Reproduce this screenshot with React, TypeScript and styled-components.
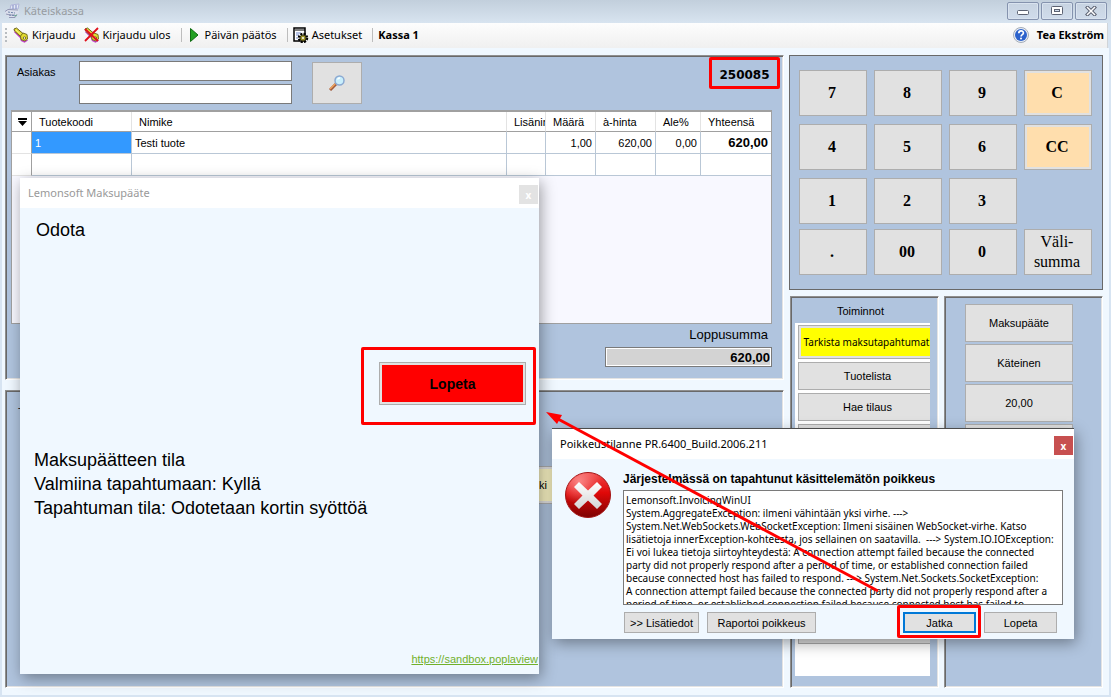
import React from 'react';
import styled, { createGlobalStyle, css } from 'styled-components';

const ui = '"Noto Sans", "Open Sans", sans-serif';
const sans = '"Liberation Sans", Arial, sans-serif';
const serif = '"Liberation Serif", "Times New Roman", serif';

const Global = createGlobalStyle`
  * { box-sizing: border-box; }
  body { margin: 0; background: #d7e4f2; color: #000; font: 11px/14px ${sans}; }
  button, input, textarea { font: inherit; color: inherit; margin: 0; padding: 0; border-radius: 0; }
  svg { display: block; flex: none; }
`;

const Window = styled.div`
  position: relative;
  min-height: 100vh;
  padding: 0 2px 2px;
  display: flex;
  flex-direction: column;
  overflow: hidden;
  background: #d7e4f2;
`;

const TitleBar = styled.header`
  height: 23px;
  padding: 2px 2px 3px 4px;
  margin: 0 -2px;
  display: flex;
  align-items: center;
  gap: 4px;
  background: linear-gradient(#c2cfdc, #d8e4f0);
  color: #979ca1;
  font: 11px/16px ${ui};
`;

const TitleText = styled.span`
  flex: 1;
`;

const WindowControls = styled.div`
  display: flex;
  gap: 2px;
  padding-right: 2px;
`;

const ControlButton = styled.button`
  width: 32px;
  height: 18px;
  display: grid;
  place-items: center;
  border: 1px solid #8593ae;
  border-radius: 2px;
  background: linear-gradient(#c7d3e1, #d0dceb);
  box-shadow: inset 0 0 0 1px #d9e3ef;
`;

const Toolbar = styled.nav`
  height: 25px;
  display: flex;
  align-items: center;
  margin-right: 1px;
  padding: 0 3px 2px 3px;
  background: linear-gradient(#fdfdfd, #f0f0f0);
  border-right: 1px solid #d0d4d8;
  font: 11px/16px ${ui};
`;

const Grip = styled.span`
  width: 2px;
  height: 14px;
  margin-right: 6px;
  background: repeating-linear-gradient(#b8bcc0 0 2px, transparent 2px 4px);
`;

const ToolButton = styled.button`
  display: flex;
  align-items: center;
  gap: 3px;
  margin-right: 8px;
  border: 0;
  background: none;
  white-space: nowrap;
`;

const Separator = styled.span`
  width: 1px;
  height: 14px;
  margin: 0 5px 0 2px;
  background: #bdbdbd;
`;

const ToolLabel = styled.strong`
  white-space: nowrap;
`;

const User = styled.div`
  margin-left: auto;
  display: flex;
  align-items: center;
  gap: 8px;
  font-weight: bold;
`;

const Workspace = styled.main`
  flex: 1;
  display: flex;
  gap: 5px;
  padding: 7px 6px 7px 3px;
  background: #f0f8ff;
`;

const SaleColumn = styled.div`
  flex: 1;
  min-width: 0;
  display: flex;
  flex-direction: column;
  gap: 10px;
`;

const SideColumn = styled.div`
  width: 314px;
  flex: none;
  display: flex;
  flex-direction: column;
  gap: 6px;
`;

const sunken = css`
  border: 1px solid;
  border-color: #8f8f8f #fff #fff #8f8f8f;
  box-shadow: inset 1px 1px 0 #696969, inset -1px -1px 0 #e3e3e3;
  background: #b0c4de;
`;

const SalePanel = styled.section`
  ${sunken}
  height: 325px;
  padding: 5px 11px 12px 5px;
  display: flex;
  flex-direction: column;
`;

const SaleHead = styled.div`
  display: flex;
  align-items: flex-start;
  height: 49px;
  padding-left: 6px;
`;

const CustomerLabel = styled.label`
  width: 62px;
  padding-top: 4px;
`;

const CustomerFields = styled.div`
  width: 213px;
  display: grid;
  gap: 3px;
  margin-right: 20px;
`;

const TextBox = styled.input`
  width: 100%;
  height: 20px;
  padding: 0 3px;
  border: 1px solid #7a7a7a;
  background: #fff;
`;

const Button = styled.button<{ $w?: number; $h?: number }>`
  width: ${(p) => (p.$w ? `${p.$w}px` : '100%')};
  height: ${(p) => p.$h ?? 28}px;
  flex: none;
  display: grid;
  place-items: center;
  border: 1px solid #adadad;
  background: #e1e1e1;
  white-space: nowrap;
`;

const SearchButton = styled(Button)`
  margin-top: 1px;
`;

const Highlight = styled.div`
  border: 3px solid #f00;
  border-radius: 2px;
  pointer-events: none;
`;

const ReceiptHighlight = styled(Highlight)`
  margin: -4px -8px 0 auto;
  width: 71px;
  height: 32px;
  padding-top: 4px;
  display: grid;
  place-items: center;
  font: bold 12px/14px "DejaVu Sans", sans-serif;
`;

const GridFrame = styled.div`
  flex: 1;
  border: 1px solid #a0a0a0;
  border-top-width: 2px;
  background: #f8f8ff;
`;

const Grid = styled.table`
  width: 100%;
  table-layout: fixed;
  border-collapse: separate;
  border-spacing: 0;
  background: #fff;
  th, td {
    height: 22px;
    padding: 0 3px;
    border-right: 1px solid #b9c7d6;
    border-bottom: 1px solid #b9c7d6;
    overflow: hidden;
    white-space: nowrap;
    text-align: left;
    font-weight: normal;
  }
  th {
    height: 20px;
    padding: 0 0 0 7px;
    border-right-color: #e3e3e3;
    border-bottom-color: #a0a0a0;
  }
  th:first-child {
    padding-left: 6px;
  }
  tr > :first-child {
    border-right-color: #a0a0a0;
  }
  td:first-child {
    border-bottom-color: #e3e3e3;
  }
  tr > :last-child {
    border-right: 0;
  }
`;

const Col = styled.col<{ $w?: number }>`
  width: ${(p) => (p.$w ? `${p.$w}px` : 'auto')};
`;

const SelectedCell = styled.td`
  background: #3399ff;
  color: #fff;
`;

const NumberCell = styled.td<{ $strong?: boolean }>`
  && {
    text-align: right;
    ${(p) => p.$strong && `font: bold 13px/14px ${sans};`}
  }
`;

const Total = styled.div`
  display: flex;
  flex-direction: column;
  align-items: flex-end;
  gap: 4px;
  padding-top: 3px;
`;

const TotalLabel = styled.label`
  padding-right: 4px;
  font: 13px/16px ${sans};
`;

const TotalBox = styled.input`
  width: 167px;
  height: 20px;
  padding: 0 1px;
  border: 1px solid #7a7a7a;
  box-shadow: inset 0 0 0 1px #fff;
  background: #d3d3d3;
  text-align: right;
  font: bold 13px/16px ${sans};
`;

const LowerPanel = styled.section`
  ${sunken}
  flex: 1;
  display: flex;
  align-items: flex-start;
  padding: 14px 200px 0 12px;
`;

const KhakiButton = styled(Button)`
  margin: 61px 0 0 auto;
  box-shadow: inset 0 0 0 2px #e1e1e1;
  background: #fbf5c4;
`;

const KeypadPanel = styled.section`
  height: 235px;
  padding: 14px 10px 14px 9px;
  border: 1px solid #696969;
  background: #b0c4de;
  display: flex;
  justify-content: space-between;
`;

const KeyColumn = styled.div`
  display: grid;
  width: 68px;
  grid-template-rows: 46px 46px 46px 46px;
  row-gap: 8px;
  align-content: start;
`;

const Key = styled.button<{ $accent?: boolean; $plain?: boolean }>`
  border: 1px solid #adadad;
  background: ${(p) => (p.$accent ? '#ffdead' : '#e1e1e1')};
  box-shadow: inset 0 0 0 2px #e1e1e1;
  font: ${(p) => (p.$plain ? 'normal' : 'bold')} 16px/20px ${serif};
  white-space: pre-line;
  padding-right: 2px;
  &:nth-child(4) {
    margin-top: -3px;
    margin-bottom: 3px;
  }
`;

const KeyGap = styled.span``;

const SidePanels = styled.div`
  flex: 1;
  display: flex;
  gap: 5px;
  padding-left: 1px;
`;

const ActionsPanel = styled.section`
  ${sunken}
  width: 149px;
  padding: 6px 8px 11px 4px;
  display: flex;
  flex-direction: column;
`;

const ActionsTitle = styled.h2`
  margin: 0;
  height: 20px;
  padding-right: 4px;
  font: 11px/16px ${sans};
  text-align: center;
`;

const ActionsList = styled.div`
  flex: 1;
  padding: 2px 0 0 3px;
  display: flex;
  flex-direction: column;
  gap: 3px;
  overflow: hidden;
  background: #fff;
`;

const WarnButton = styled(Button)`
  background: #ff0;
  box-shadow: inset 0 0 0 2px #e1e1e1;
  font: 10px/14px ${ui};
`;

const PaymentPanel = styled.section`
  ${sunken}
  flex: 1;
  padding: 7px 20px;
  display: flex;
  flex-direction: column;
  gap: 2px;
`;

const Dialog = styled.section`
  position: absolute;
  display: flex;
  flex-direction: column;
  background: #f0f8ff;
  box-shadow: 2px 4px 14px rgba(0, 0, 0, 0.38);
`;

const DialogTitle = styled.header<{ $muted?: boolean }>`
  height: 30px;
  display: flex;
  align-items: center;
  justify-content: space-between;
  padding: 0 1px 0 8px;
  background: #fff;
  color: ${(p) => (p.$muted ? '#999' : '#000')};
  font: 11px/16px ${ui};
`;

const CloseButton = styled.button<{ $muted?: boolean }>`
  width: 19px;
  height: 19px;
  margin-top: 3px;
  border: 0;
  background: ${(p) => (p.$muted ? '#e3e3e3' : '#c75050')};
  color: #fff;
  font: bold 10px/16px ${ui};
`;

const TerminalDialog = styled(Dialog)`
  left: 20px;
  top: 178px;
  width: 519px;
  height: 496px;
`;

const TerminalBody = styled.div`
  flex: 1;
  padding: 10px 0 7px 14px;
  display: flex;
  flex-direction: column;
  font: 18px/24px ${sans};
`;

const StatusText = styled.p`
  margin: 0 2px;
`;

const StopHighlight = styled(Highlight)`
  align-self: flex-end;
  width: 175px;
  height: 78px;
  margin: 105px 3px 23px 0;
  padding: 12px 7px 17px 15px;
  display: flex;
  pointer-events: auto;
`;

const StopButton = styled.button`
  flex: 1;
  border: 1px solid #adadad;
  background: #f00;
  box-shadow: inset 0 0 0 2px #e1e1e1;
  font: bold 14px/16px ${sans};
`;

const TerminalState = styled.p`
  margin: 0;
  white-space: pre-line;
`;

const TerminalLink = styled.a`
  margin: auto 1px 0 auto;
  color: #71b02b;
  font: 11px/16px ${sans};
`;

const ErrorDialog = styled(Dialog)`
  left: 552px;
  top: 429px;
  width: 522px;
  height: 210px;
  box-shadow: 2px 4px 14px rgba(0, 0, 0, 0.38), 0 -1px 0 #555;
`;

const ErrorBody = styled.div`
  flex: 1;
  display: flex;
  gap: 12px;
  padding: 13px 11px 6px 13px;
`;

const ErrorContent = styled.div`
  flex: 1;
  display: flex;
  flex-direction: column;
`;

const ErrorHeading = styled.h2`
  margin: 0 0 4px;
  font: bold 12px/14px ${sans};
  white-space: nowrap;
`;

const ErrorText = styled.textarea`
  display: block;
  width: 100%;
  height: 115px;
  padding: 3px 2px;
  border: 1px solid #7a7a7a;
  background: #fff;
  resize: none;
  outline: none;
  overflow: hidden;
  white-space: pre;
  font: 10px/13px ${ui};
`;

const ErrorActions = styled.div`
  display: flex;
  gap: 8px;
  padding: 7px 6px 0 1px;
`;

const FocusSlot = styled.div`
  position: relative;
  margin-left: auto;
`;

const ContinueButton = styled(Button)`
  border: 2px solid #0078d7;
`;

const ContinueHighlight = styled(Highlight)`
  position: absolute;
  inset: -7px -5px -5px -6px;
`;

const Arrow = styled.svg`
  position: absolute;
  left: 546px;
  top: 411px;
  pointer-events: none;
`;

const AppIcon = () => (
  <svg width="16" height="16" viewBox="0 0 16 16" fill="none" opacity="0.75">
    <path d="M6 6l1-4 8-1-1 5z" fill="#eef0fb" stroke="#a9aad8" />
    <path d="M1 8l3-2 10 0 1 3-2 4-6 2-5-3z" fill="#e0e1ee" />
    <path d="M1 8.500l3-2 10 .5M2 11l4 1 5 0M5 14.500l6 0 2-3" stroke="#7e80a4" />
    <path d="M4 9l7 1M5 12l5 .5" stroke="#4f6796" strokeDasharray="2 1" />
    <path d="M8 3h2M11 3h2M8 5h2M11 5h2" stroke="#6670b8" />
    <path d="M10 13l3-1" stroke="#4e9b78" />
  </svg>
);

const KeyIcon = ({ crossed = false }: { crossed?: boolean }) => (
  <svg width="16" height="16" viewBox="0 0 16 16" fill="none">
    <path d="M1.500 4.500l6 6 1 3 3 1.500 3-2" stroke="#c23cc8" strokeWidth="1.500" />
    <path d="M1 2l2.500-1L10 6.500 7.500 9.500 1.500 4z" fill="#e2da30" stroke="#6d6420" />
    <path d="M7.500 9l2.500-3 4 1.500.5 4.500-2.500 2-4-1.500z" fill="#e2da30" stroke="#77701c" />
    <path d="M3 3l4.500 4" stroke="#f8f490" />
    <circle cx="11.500" cy="11" r="1.200" fill="#fff" stroke="#77701c" />
    {crossed && <path d="M1 14L14 1M1 2l13 12" stroke="#e0101c" strokeWidth="1.800" />}
  </svg>
);

const PlayIcon = () => (
  <svg width="15" height="16" viewBox="-3 0 15 16">
    <path d="M.5 1.500L8 8 .5 14.500z" fill="#22a022" stroke="#0f6d12" />
  </svg>
);

const SettingsIcon = () => (
  <svg width="16" height="16" viewBox="0 0 16 16" fill="none">
    <path d="M1 1h11v13H1z" fill="#fff" stroke="#000" strokeWidth="1.500" />
    <path d="M2 3h10" stroke="#000" />
    <path d="M3 6h5M3 8h3M3 11h2" stroke="#7187c9" />
    <circle cx="10" cy="11" r="4" stroke="#000" strokeWidth="2.500" strokeDasharray="2 1.140" />
    <circle cx="10" cy="11" r="3" fill="#9a9228" stroke="#3c3810" />
    <circle cx="10" cy="11" r="1" fill="#fff" />
  </svg>
);

const HelpIcon = () => (
  <svg width="16" height="16" viewBox="0 0 16 16" fill="none">
    <circle cx="8" cy="8" r="7.500" fill="#e9eef6" stroke="#a5adb8" />
    <circle cx="8" cy="8" r="6" fill="#2c62cc" />
    <path d="M5.800 6.200c0-3 4.600-3 4.600-.3 0 1.800-2.300 1.700-2.300 3.600" stroke="#fff" strokeWidth="1.700" />
    <circle cx="8" cy="11.600" r="1" fill="#fff" />
  </svg>
);

const SearchIcon = () => (
  <svg width="16" height="16" viewBox="0 0 16 16" fill="none">
    <path d="M1 15l6-6" stroke="#a05a3c" strokeWidth="3" />
    <path d="M1 14l5.500-5.500" stroke="#f0a45c" strokeWidth="1.500" />
    <circle cx="10.500" cy="5.500" r="4.500" fill="#c9effc" stroke="#8aa9d2" strokeWidth="1.500" />
    <path d="M8.500 4.500c.5-1 1.500-1.500 2.500-1.500" stroke="#fff" strokeWidth="1.500" />
  </svg>
);

const FilterIcon = () => (
  <svg width="9" height="8" viewBox="0 0 9 8">
    <path d="M0 0h9v2H0zM0 3h9L4.500 8z" fill="#000" />
  </svg>
);

const ErrorIcon = () => (
  <svg width="46" height="46" viewBox="0 0 46 46" fill="none">
    <defs>
      <linearGradient id="ball" x1="0" y1="0" x2="0" y2="1">
        <stop offset="0" stopColor="#f04848" />
        <stop offset="0.450" stopColor="#e00808" />
        <stop offset="1" stopColor="#7c0202" />
      </linearGradient>
      <radialGradient id="shine" cx="0.300" cy="0.200" r="0.500">
        <stop offset="0" stopColor="#ff9c9c" stopOpacity="0.800" />
        <stop offset="1" stopColor="#ff9c9c" stopOpacity="0" />
      </radialGradient>
      <linearGradient id="cross" x1="0" y1="0" x2="0" y2="1">
        <stop offset="0" stopColor="#fff" />
        <stop offset="1" stopColor="#d4d4d4" />
      </linearGradient>
    </defs>
    <circle cx="23" cy="23" r="22.500" fill="url(#ball)" stroke="#a31414" />
    <circle cx="23" cy="23" r="22" fill="url(#shine)" />
    <path
      d="M14 10L23 18.500 32 10l5 5-8.500 8.500L37 32l-5 5-9-8.500L14 37l-5-5 8.500-8.500L9 15z"
      fill="url(#cross)"
    />
  </svg>
);

const keyColumns = [
  ['7', '4', '1', '.'],
  ['8', '5', '2', '00'],
  ['9', '6', '3', '0'],
];

const headers = ['Tuotekoodi', 'Nimike', 'Lisänim', 'Määrä', 'à-hinta', 'Ale%', 'Yhteensä'];
const widths = [20, 100, undefined, 39, 50, 60, 45, 70];
const spareActions = [28, 28, 28, 28, 28, 28, 34];

const errorMessage = [
  'Lemonsoft.InvoicingWinUI',
  'System.AggregateException: ilmeni vähintään yksi virhe. --->',
  'System.Net.WebSockets.WebSocketException: Ilmeni sisäinen WebSocket-virhe. Katso',
  'lisätietoja innerException-kohteesta, jos sellainen on saatavilla.  ---> System.IO.IOException:',
  'Ei voi lukea tietoja siirtoyhteydestä: A connection attempt failed because the connected',
  'party did not properly respond after a period of time, or established connection failed',
  'because connected host has failed to respond. ---> System.Net.Sockets.SocketException:',
  'A connection attempt failed because the connected party did not properly respond after a',
  'period of time, or established connection failed because connected host has failed to',
].join('\n');

export default function App() {
  return (
    <>
      <Global />
      <Window>
        <TitleBar>
          <AppIcon />
          <TitleText>Käteiskassa</TitleText>
          <WindowControls>
            <ControlButton aria-label="Pienennä">
              <svg width="12" height="10" viewBox="0 0 12 10">
                <rect x="0.500" y="4.500" width="11" height="4" rx="1" fill="#fff" stroke="#5c6272" />
              </svg>
            </ControlButton>
            <ControlButton aria-label="Suurenna">
              <svg width="12" height="10" viewBox="0 0 12 10">
                <rect x="0.500" y="0.500" width="11" height="8" rx="1" fill="#fff" stroke="#5c6272" />
                <rect x="3.500" y="3.500" width="5" height="2" fill="#d0dceb" stroke="#5c6272" />
              </svg>
            </ControlButton>
            <ControlButton aria-label="Sulje">
              <svg width="12" height="10" viewBox="0 0 12 10" fill="none">
                <path d="M2.500 1.500l7 7M9.500 1.500l-7 7" stroke="#5c6272" strokeWidth="3.500" strokeLinecap="square" />
                <path d="M2.500 1.500l7 7M9.500 1.500l-7 7" stroke="#fff" strokeWidth="1.500" strokeLinecap="square" />
              </svg>
            </ControlButton>
          </WindowControls>
        </TitleBar>

        <Toolbar>
          <Grip />
          <ToolButton><KeyIcon />Kirjaudu</ToolButton>
          <ToolButton><KeyIcon crossed />Kirjaudu ulos</ToolButton>
          <Separator />
          <ToolButton><PlayIcon />Päivän päätös</ToolButton>
          <Separator />
          <ToolButton><SettingsIcon />Asetukset</ToolButton>
          <Separator />
          <ToolLabel>Kassa 1</ToolLabel>
          <User><HelpIcon />Tea Ekström</User>
        </Toolbar>

        <Workspace>
          <SaleColumn>
            <SalePanel>
              <SaleHead>
                <CustomerLabel htmlFor="customer">Asiakas</CustomerLabel>
                <CustomerFields>
                  <TextBox id="customer" />
                  <TextBox aria-label="Asiakkaan nimi" />
                </CustomerFields>
                <SearchButton $w={50} $h={42} aria-label="Hae asiakas"><SearchIcon /></SearchButton>
                <ReceiptHighlight>250085</ReceiptHighlight>
              </SaleHead>
              <GridFrame>
                <Grid>
                  <colgroup>
                    {widths.map((w, i) => <Col key={i} $w={w} />)}
                  </colgroup>
                  <thead>
                    <tr>
                      <th><FilterIcon /></th>
                      {headers.map((h) => <th key={h}>{h}</th>)}
                    </tr>
                  </thead>
                  <tbody>
                    <tr>
                      <td />
                      <SelectedCell>1</SelectedCell>
                      <td>Testi tuote</td>
                      <td />
                      <NumberCell>1,00</NumberCell>
                      <NumberCell>620,00</NumberCell>
                      <NumberCell>0,00</NumberCell>
                      <NumberCell $strong>620,00</NumberCell>
                    </tr>
                    <tr>
                      <td /><td /><td /><td /><td /><td /><td /><td />
                    </tr>
                  </tbody>
                </Grid>
              </GridFrame>
              <Total>
                <TotalLabel htmlFor="total">Loppusumma</TotalLabel>
                <TotalBox id="total" readOnly value="620,00" />
              </Total>
            </SalePanel>
            <LowerPanel>
              <span>T</span>
              <KhakiButton $w={80} $h={38}>ki</KhakiButton>
            </LowerPanel>
          </SaleColumn>

          <SideColumn>
            <KeypadPanel>
              {keyColumns.map((keys) => (
                <KeyColumn key={keys[0]}>
                  {keys.map((k) => <Key key={k}>{k}</Key>)}
                </KeyColumn>
              ))}
              <KeyColumn>
                <Key $accent>C</Key>
                <Key $accent>CC</Key>
                <KeyGap />
                <Key $plain>{'Väli-\nsumma'}</Key>
              </KeyColumn>
            </KeypadPanel>
            <SidePanels>
              <ActionsPanel>
                <ActionsTitle>Toiminnot</ActionsTitle>
                <ActionsList>
                  <WarnButton $w={137} $h={34}>Tarkista maksutapahtumat</WarnButton>
                  <Button $w={139}>Tuotelista</Button>
                  <Button $w={139}>Hae tilaus</Button>
                  {spareActions.map((h, i) => (
                    <Button key={i} $w={139} $h={h} aria-label={`Toiminto ${i + 4}`} />
                  ))}
                </ActionsList>
              </ActionsPanel>
              <PaymentPanel>
                <Button $w={108} $h={38}>Maksupääte</Button>
                <Button $w={108} $h={38}>Käteinen</Button>
                <Button $w={108} $h={38}>20,00</Button>
                <Button $w={108} $h={38} aria-label="Maksutapa 4" />
              </PaymentPanel>
            </SidePanels>
          </SideColumn>
        </Workspace>

        <TerminalDialog role="dialog" aria-label="Lemonsoft Maksupääte">
          <DialogTitle $muted>
            Lemonsoft Maksupääte
            <CloseButton $muted>x</CloseButton>
          </DialogTitle>
          <TerminalBody>
            <StatusText>Odota</StatusText>
            <StopHighlight>
              <StopButton>Lopeta</StopButton>
            </StopHighlight>
            <TerminalState>
              {'Maksupäätteen tila\nValmiina tapahtumaan: Kyllä\nTapahtuman tila: Odotetaan kortin syöttöä'}
            </TerminalState>
            <TerminalLink href="#">https://sandbox.poplaview</TerminalLink>
          </TerminalBody>
        </TerminalDialog>

        <ErrorDialog role="dialog" aria-label="Poikkeustilanne">
          <DialogTitle>
            Poikkeustilanne PR.6400_Build.2006.211
            <CloseButton>x</CloseButton>
          </DialogTitle>
          <ErrorBody>
            <ErrorIcon />
            <ErrorContent>
              <ErrorHeading>Järjestelmässä on tapahtunut käsittelemätön poikkeus</ErrorHeading>
              <ErrorText readOnly aria-label="Virheen tiedot" value={errorMessage} />
              <ErrorActions>
                <Button $w={75} $h={21}>&gt;&gt; Lisätiedot</Button>
                <Button $w={109} $h={21}>Raportoi poikkeus</Button>
                <FocusSlot>
                  <ContinueButton $w={73} $h={21}>Jatka</ContinueButton>
                  <ContinueHighlight />
                </FocusSlot>
                <Button $w={73} $h={21}>Lopeta</Button>
              </ErrorActions>
            </ErrorContent>
          </ErrorBody>
        </ErrorDialog>

        <Arrow width="334" height="183" viewBox="0 0 334 183">
          <path d="M12 8L332 180" stroke="#f00" strokeWidth="3" />
          <path d="M0 1l16 3-5 9z" fill="#f00" />
        </Arrow>
      </Window>
    </>
  );
}
